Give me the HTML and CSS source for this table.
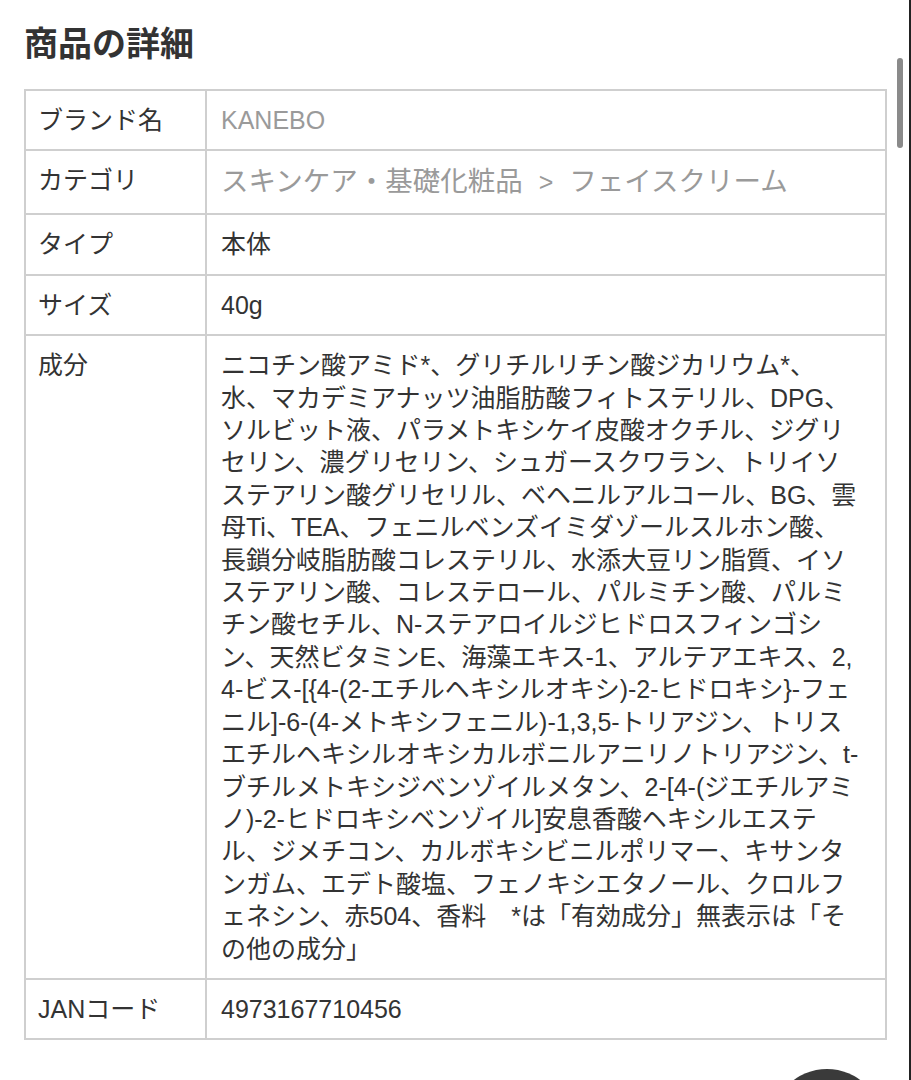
FILE: index.html
```html
<!DOCTYPE html>
<html lang="ja">
<head>
<meta charset="utf-8">
<title>商品の詳細</title>
<link rel="stylesheet" href="styles.css">
</head>
<body>
<main class="page">
  <h2 class="title">商品の詳細</h2>
  <table class="spec">
    <tr>
      <th>ブランド名</th>
      <td class="muted">KANEBO</td>
    </tr>
    <tr>
      <th>カテゴリ</th>
      <td class="muted category">スキンケア・基礎化粧品<span class="sep">&gt;</span>フェイスクリーム</td>
    </tr>
    <tr>
      <th>タイプ</th>
      <td>本体</td>
    </tr>
    <tr>
      <th>サイズ</th>
      <td>40g</td>
    </tr>
    <tr>
      <th>成分</th>
      <td class="ingredients">ニコチン酸アミド*、グリチルリチン酸ジカリウム*、<br>水、マカデミアナッツ油脂肪酸フィトステリル、DPG、<br>ソルビット液、パラメトキシケイ皮酸オクチル、ジグリ<br>セリン、濃グリセリン、シュガースクワラン、トリイソ<br>ステアリン酸グリセリル、ベヘニルアルコール、BG、雲<br>母Ti、TEA、フェニルベンズイミダゾールスルホン酸、<br>長鎖分岐脂肪酸コレステリル、水添大豆リン脂質、イソ<br>ステアリン酸、コレステロール、パルミチン酸、パルミ<br>チン酸セチル、N-ステアロイルジヒドロスフィンゴシ<br>ン、天然ビタミンE、海藻エキス-1、アルテアエキス、2,<br>4-ビス-[{4-(2-エチルヘキシルオキシ)-2-ヒドロキシ}-フェ<br>ニル]-6-(4-メトキシフェニル)-1,3,5-トリアジン、トリス<br>エチルヘキシルオキシカルボニルアニリノトリアジン、t-<br>ブチルメトキシジベンゾイルメタン、2-[4-(ジエチルアミ<br>ノ)-2-ヒドロキシベンゾイル]安息香酸ヘキシルエステ<br>ル、ジメチコン、カルボキシビニルポリマー、キサンタ<br>ンガム、エデト酸塩、フェノキシエタノール、クロルフ<br>ェネシン、赤504、香料　*は「有効成分」無表示は「そ<br>の他の成分」</td>
    </tr>
    <tr>
      <th>JANコード</th>
      <td>4973167710456</td>
    </tr>
  </table>
</main>
<div class="scrollbar"></div>
<div class="edge"></div>
<div class="fab"></div>
</body>
</html>
```
FILE: styles.css
```css
html, body {
  margin: 0;
  padding: 0;
  background: #fff;
}
body {
  font-family: "Liberation Sans", "Noto Sans CJK JP", sans-serif;
  color: #333;
  width: 911px;
  height: 1080px;
  overflow: hidden;
}
.page {
  padding: 24px 24px 0 24px;
  width: 863px;
}
.title {
  margin: 0 0 25px 0;
  font-size: 34px;
  line-height: 40px;
  font-weight: bold;
  color: #333;
}
.spec {
  width: 863px;
  table-layout: fixed;
  border-collapse: collapse;
  border: 2px solid #cfcfcf;
  font-size: 25px;
  line-height: 32.4px;
}
.spec th,
.spec td {
  border: 2px solid #cfcfcf;
  padding: 13px 13px 13px 14px;
  text-align: left;
  vertical-align: top;
  font-weight: normal;
}
.spec th {
  width: 154px;
  padding-left: 12px;
}
.spec td {
  white-space: nowrap;
}
.spec .muted {
  color: #9a9a9a;
}
.spec .category {
  font-size: 27.5px;
  line-height: 38px;
  padding-top: 12px;
  padding-bottom: 12px;
}
.spec .sep {
  display: inline-block;
  margin: 0 16px;
  font-size: 25px;
}
.scrollbar {
  position: fixed;
  left: 897px;
  top: 58px;
  width: 6px;
  height: 90px;
  border-radius: 3px;
  background: #8a8a8a;
}
.edge {
  position: fixed;
  right: 0;
  top: 0;
  width: 2px;
  height: 1080px;
  background: #222;
}
.fab {
  position: fixed;
  left: 771px;
  top: 1069px;
  width: 112px;
  height: 112px;
  border-radius: 50%;
  background: #3a3a3a;
}
```
